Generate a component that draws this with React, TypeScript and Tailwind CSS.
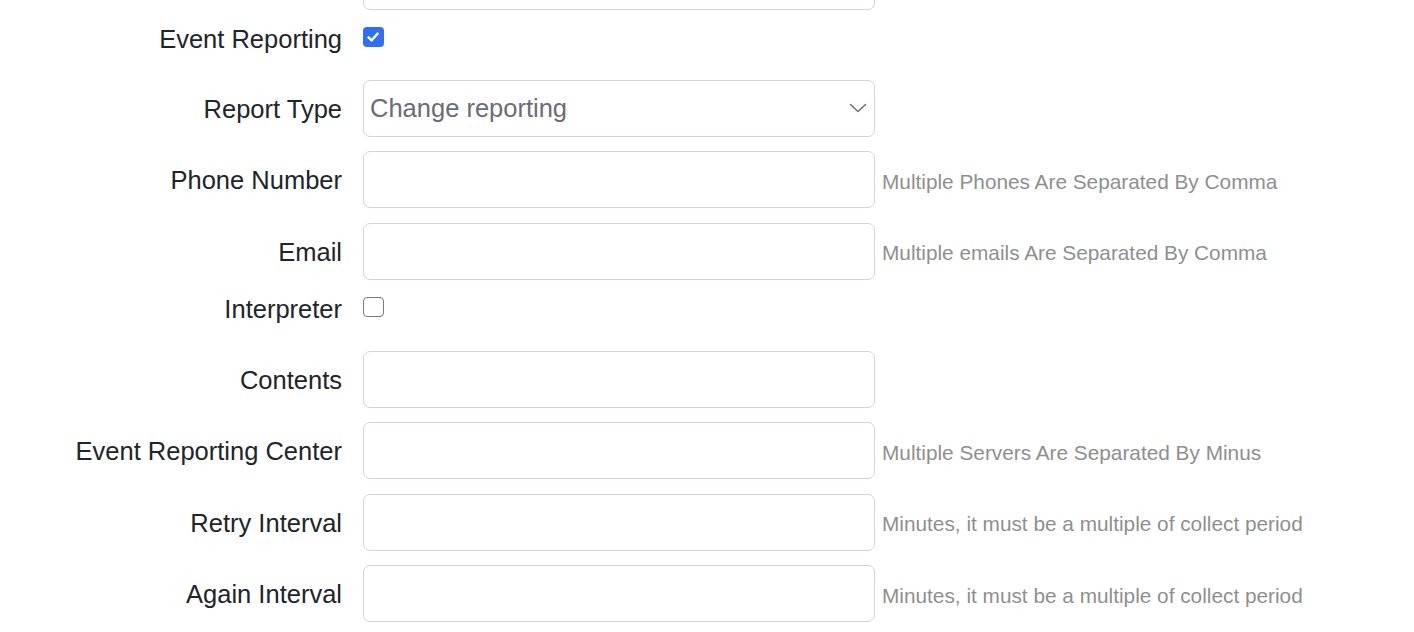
import React from "react";

const font = { fontFamily: '"Liberation Sans", Arial, Helvetica, sans-serif' };

function Label({ children }: { children: React.ReactNode }) {
  return (
    <div className="mt-[2px] w-[342px] shrink-0 text-right text-[25.5px] text-[#212529]">{children}</div>
  );
}

function InputRow({ label, help }: { label: string; help?: string }) {
  return (
    <div className="flex h-[57px] items-center">
      <Label>{label}</Label>
      <div className="ml-[21px] h-[57px] w-[512px] shrink-0 rounded-[7px] border border-[#d3d2e0] bg-white" />
      {help && <div className="ml-[7px] mt-[4px] whitespace-nowrap text-[20.8px] text-[#8f8f8f]">{help}</div>}
    </div>
  );
}

function CheckRow({ label, checked, tall }: { label: string; checked?: boolean; tall?: boolean }) {
  return (
    <div className={tall ? "flex h-[42px] items-start" : "flex h-[41px] items-start"}>
      <div className="mt-[1px] w-[342px] shrink-0 text-right text-[25.5px] leading-[29px] text-[#212529]">{label}</div>
      <div className="ml-[21px] mt-[2.5px]">
        {checked ? (
          <div className="flex h-[20.5px] w-[20.5px] items-center justify-center rounded-[4px] bg-[#2f6ef5]">
            <svg width="14" height="14" viewBox="0 0 14 14" fill="none">
              <path d="M2.5 7.3 L5.6 10.3 L11.6 3.6" stroke="white" strokeWidth="2.4" strokeLinecap="round" strokeLinejoin="round" />
            </svg>
          </div>
        ) : (
          <div className="h-[20.5px] w-[20.5px] rounded-[4px] border-[1.5px] border-[#7a7a7a] bg-white" />
        )}
      </div>
    </div>
  );
}

export default function App() {
  return (
    <div className="h-[632px] w-full overflow-hidden bg-white" style={font}>
      <div className="mt-[-47.5px] flex flex-col gap-[14.5px]">
        <InputRow label="" />
        <CheckRow label="Event Reporting" checked />
        <div className="flex h-[57px] items-center">
          <Label>Report Type</Label>
          <div className="ml-[21px] flex h-[57px] w-[512px] shrink-0 items-center justify-between rounded-[7px] border border-[#d3d2e0] bg-white pl-[6px] pr-[7px]">
            <span className="text-[25.5px] text-[#6a6c77]">Change reporting</span>
            <svg width="18" height="10" viewBox="0 0 18 10" fill="none">
              <path d="M1.5 1.5 L9 8.5 L16.5 1.5" stroke="#6f6f6f" strokeWidth="1.5" strokeLinecap="round" strokeLinejoin="round" />
            </svg>
          </div>
        </div>
        <InputRow label="Phone Number" help="Multiple Phones Are Separated By Comma" />
        <InputRow label="Email" help="Multiple emails Are Separated By Comma" />
        <CheckRow label="Interpreter" tall />
        <InputRow label="Contents" />
        <InputRow label="Event Reporting Center" help="Multiple Servers Are Separated By Minus" />
        <InputRow label="Retry Interval" help="Minutes, it must be a multiple of collect period" />
        <InputRow label="Again Interval" help="Minutes, it must be a multiple of collect period" />
      </div>
    </div>
  );
}
